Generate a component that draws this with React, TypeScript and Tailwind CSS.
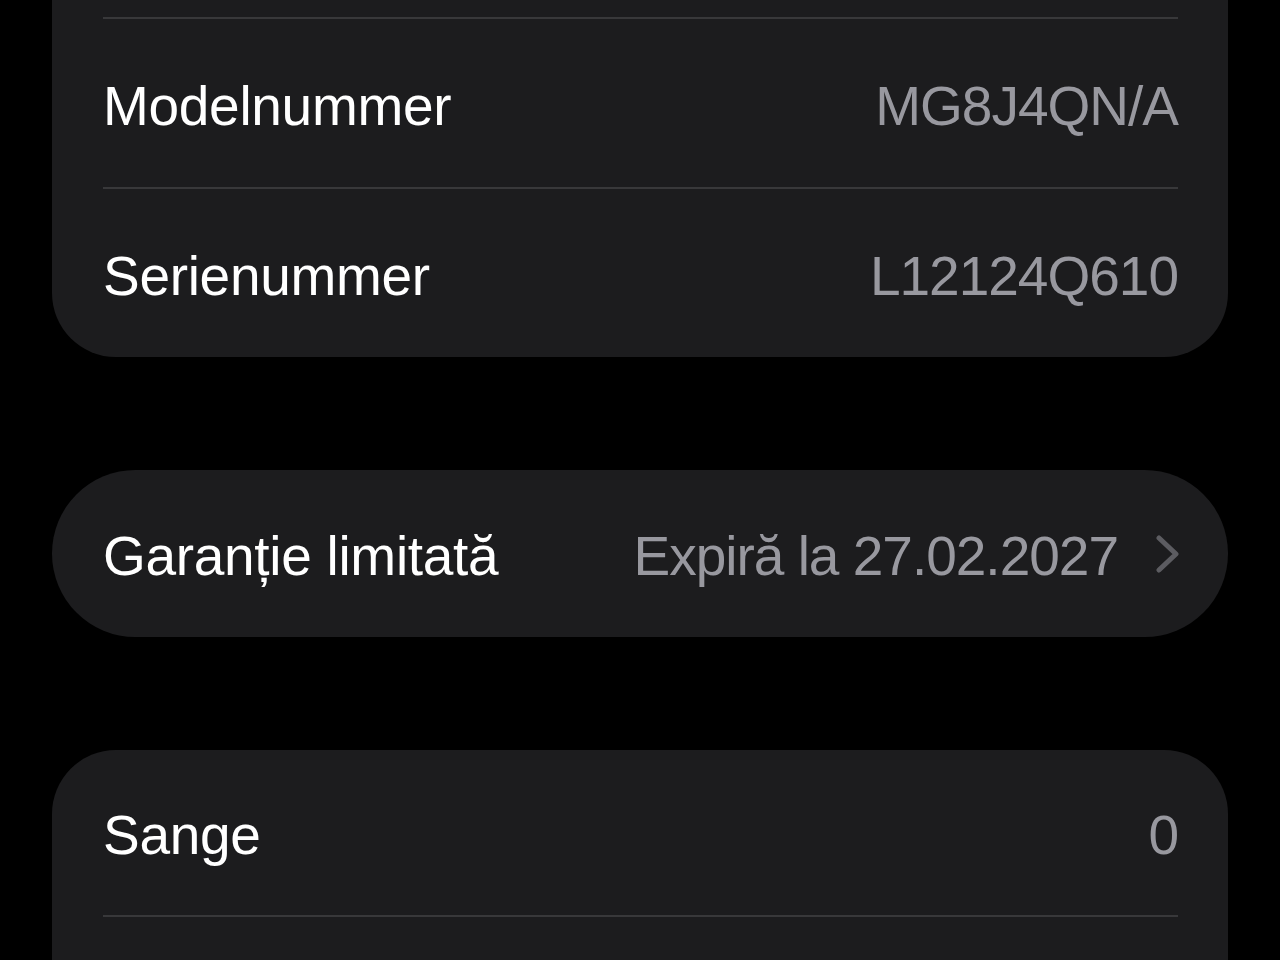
import { ReactNode } from "react";

function Row({ label, value, chevron = false, h = "h-[168px]" }: { label: string; value: string; chevron?: boolean; h?: string }) {
  return (
    <div className={`flex items-center justify-between pt-[6px] ${h}`}>
      <span className="text-white">{label}</span>
      <span className="flex items-center gap-[37px] tracking-[-1px] text-[#98989f]">
        {value}
        {chevron && (
          <svg width="26" height="38" viewBox="0 0 26 38" fill="none" className="-mr-[3px] -mt-[6px]">
            <path d="M4 3 L21 19 L4 35" stroke="#5c5c61" strokeWidth="5" strokeLinecap="round" strokeLinejoin="round" />
          </svg>
        )}
      </span>
    </div>
  );
}

function Sep() {
  return <div className="h-[2px] bg-[#38383a]" />;
}

function Card({ children, className = "" }: { children: ReactNode; className?: string }) {
  return <div className={`mx-[52px] rounded-[64px] bg-[#1c1c1e] pl-[51px] pr-[50px] ${className}`}>{children}</div>;
}

export default function App() {
  return (
    <div
      className="h-[960px] w-[1280px] overflow-hidden bg-black text-[55px] leading-none tracking-[-0.3px]"
      style={{ fontFamily: '"Liberation Sans", Arial, sans-serif' }}
    >
      {/* top card, scrolled partly out of view */}
      <Card className="-mt-[151px]">
        <div className="h-[168px]" />
        <Sep />
        <Row label="Modelnummer" value="MG8J4QN/A" />
        <Sep />
        <Row label="Serienummer" value="L12124Q610" />
      </Card>

      <Card className="mt-[113px] rounded-[84px]">
        <Row label="Garanție limitată" value="Expiră la 27.02.2027" chevron h="h-[167px]" />
      </Card>

      <Card className="mt-[113px]">
        <Row label="Sange" value="0" h="h-[165px]" />
        <Sep />
        <div className="h-[168px]" />
      </Card>
    </div>
  );
}
